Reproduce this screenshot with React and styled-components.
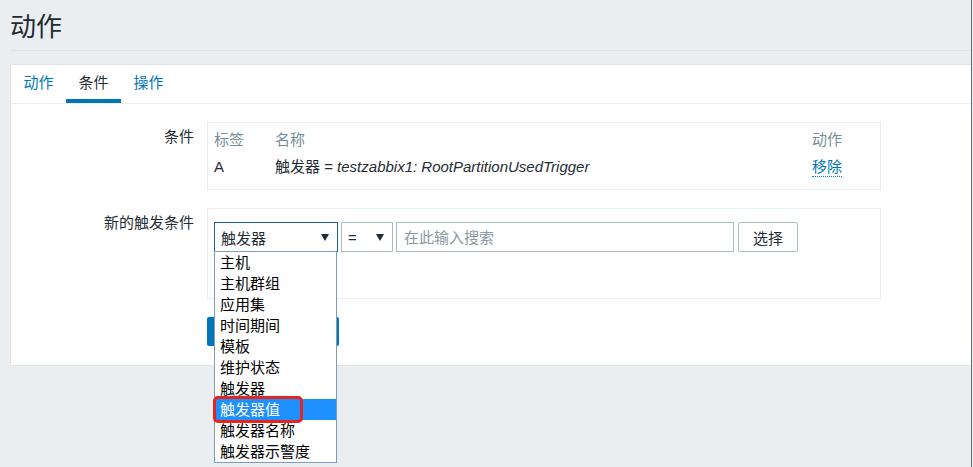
import React from "react";
import styled, { createGlobalStyle } from "styled-components";

const GlobalStyle = createGlobalStyle`
  html, body {
    margin: 0;
    padding: 0;
    background: #ebeef0;
  }
  body {
    font-family: "Liberation Sans", "Noto Sans CJK SC", sans-serif;
    font-size: 15px;
    color: #1f2c33;
  }
  * {
    box-sizing: border-box;
  }
`;

const Page = styled.div`
  width: 972px;
  min-height: 467px;
  padding-left: 10px;
  border-right: 1px solid #6b6b6b;
`;

const Header = styled.header`
  height: 51px;
  padding-top: 12px;
  border-bottom: 1px solid #dde2e5;
`;

const Title = styled.h1`
  margin: 0;
  font-size: 26px;
  font-weight: normal;
  line-height: 30px;
`;

const Panel = styled.div`
  margin-top: 13px;
  height: 302px;
  background: #fff;
  border: 1px solid #dfe4e7;
  border-right: none;
`;

const TabBar = styled.div`
  display: flex;
  height: 39px;
  border-bottom: 1px solid #ebeef0;
`;

const Tab = styled.div`
  display: flex;
  align-items: center;
  height: 38px;
  padding: 2px 12.5px 0;
  color: ${(p) => (p.$active ? "#1f2c33" : "#0275b8")};
  border-bottom: 4px solid ${(p) => (p.$active ? "#0275b8" : "transparent")};
  line-height: 20px;
`;

const Form = styled.div`
  display: grid;
  grid-template-columns: 183px 674px;
  column-gap: 13px;
  row-gap: 18px;
  padding: 18px 0 19px;
`;

const Label = styled.div`
  text-align: right;
  padding-top: 5px;
  line-height: 20px;
`;

const Box = styled.div`
  border: 1px solid #ebeef0;
  padding: ${(p) => p.$pad};
`;

const CondGrid = styled.div`
  display: grid;
  grid-template-columns: 61px 1fr 68px;
`;

const HeadCell = styled.div`
  color: #768d99;
  line-height: 26px;
`;

const Cell = styled.div`
  line-height: 27px;
`;

const Italic = styled.span`
  font-style: italic;
`;

const RemoveLink = styled.span`
  display: inline-block;
  line-height: 18px;
  color: #0275b8;
  border-bottom: 1px dotted #0275b8;
`;

const Controls = styled.div`
  display: flex;
  gap: 3px;
`;

const Select = styled.div`
  position: relative;
  display: flex;
  align-items: center;
  justify-content: space-between;
  width: ${(p) => p.$width}px;
  height: 30px;
  padding: 0 8px 0 6px;
  background: #fff;
  border: 1px solid ${(p) => (p.$focused ? "#1f5f91" : "#acbbc2")};
`;

const Arrow = styled.span`
  width: 0;
  height: 0;
  border-left: 4px solid transparent;
  border-right: 4px solid transparent;
  border-top: 7px solid #1f2c33;
`;

const SearchInput = styled.input`
  width: 338px;
  height: 30px;
  padding: 0 7px;
  border: 1px solid #acbbc2;
  font: inherit;
  color: #1f2c33;
  outline: none;

  &::placeholder {
    color: #8a99a3;
  }
`;

const Button = styled.button`
  width: 60px;
  height: 30px;
  margin-left: 1px;
  padding: 0;
  background: #fff;
  border: 1px solid #acbbc2;
  border-radius: 2px;
  font: inherit;
  color: #1f2c33;
`;

const AddButton = styled.button`
  display: block;
  width: 132px;
  height: 29px;
  padding: 0;
  background: #0275b8;
  border: none;
  border-radius: 2px;
`;

const DropList = styled.ul`
  position: absolute;
  top: 100%;
  left: -1px;
  z-index: 10;
  width: 123px;
  margin: 0;
  padding: 0;
  list-style: none;
  background: #fff;
  border: 1px solid #7f9db9;
`;

const Option = styled.li`
  position: relative;
  height: 21px;
  padding-left: 5px;
  line-height: 21px;
  white-space: nowrap;
  color: ${(p) => (p.$selected ? "#fff" : "#000")};
  background: ${(p) => (p.$selected ? "#1e90ff" : "#fff")};
`;

const Marker = styled.span`
  position: absolute;
  left: -2px;
  top: -3px;
  z-index: 2;
  width: 90px;
  height: 27px;
  border: 3px solid #e8231b;
  border-radius: 5px;
`;

const options = [
  "主机",
  "主机群组",
  "应用集",
  "时间期间",
  "模板",
  "维护状态",
  "触发器",
  "触发器值",
  "触发器名称",
  "触发器示警度",
];

export default function App() {
  return (
    <>
      <GlobalStyle />
      <Page>
        <Header>
          <Title>动作</Title>
        </Header>
        <Panel>
          <TabBar>
            <Tab>动作</Tab>
            <Tab $active>条件</Tab>
            <Tab>操作</Tab>
          </TabBar>
          <Form>
            <Label>条件</Label>
            <Box $pad="4px 0 9px 6px">
              <CondGrid>
                <HeadCell>标签</HeadCell>
                <HeadCell>名称</HeadCell>
                <HeadCell>动作</HeadCell>
                <Cell>A</Cell>
                <Cell>
                  触发器 = <Italic>testzabbix1: RootPartitionUsedTrigger</Italic>
                </Cell>
                <Cell>
                  <RemoveLink>移除</RemoveLink>
                </Cell>
              </CondGrid>
            </Box>

            <Label>新的触发条件</Label>
            <Box $pad="13px 6px 46px">
              <Controls>
                <Select $width={124} $focused>
                  <span>触发器</span>
                  <Arrow />
                  <DropList>
                    {options.map((o) => (
                      <Option key={o} $selected={o === "触发器值"}>
                        {o}
                        {o === "触发器值" && <Marker />}
                      </Option>
                    ))}
                  </DropList>
                </Select>
                <Select $width={52}>
                  <span>=</span>
                  <Arrow />
                </Select>
                <SearchInput placeholder="在此输入搜索" />
                <Button>选择</Button>
              </Controls>
            </Box>

            <div />
            <div>
              <AddButton aria-label="添加" />
            </div>
          </Form>
        </Panel>
      </Page>
    </>
  );
}
